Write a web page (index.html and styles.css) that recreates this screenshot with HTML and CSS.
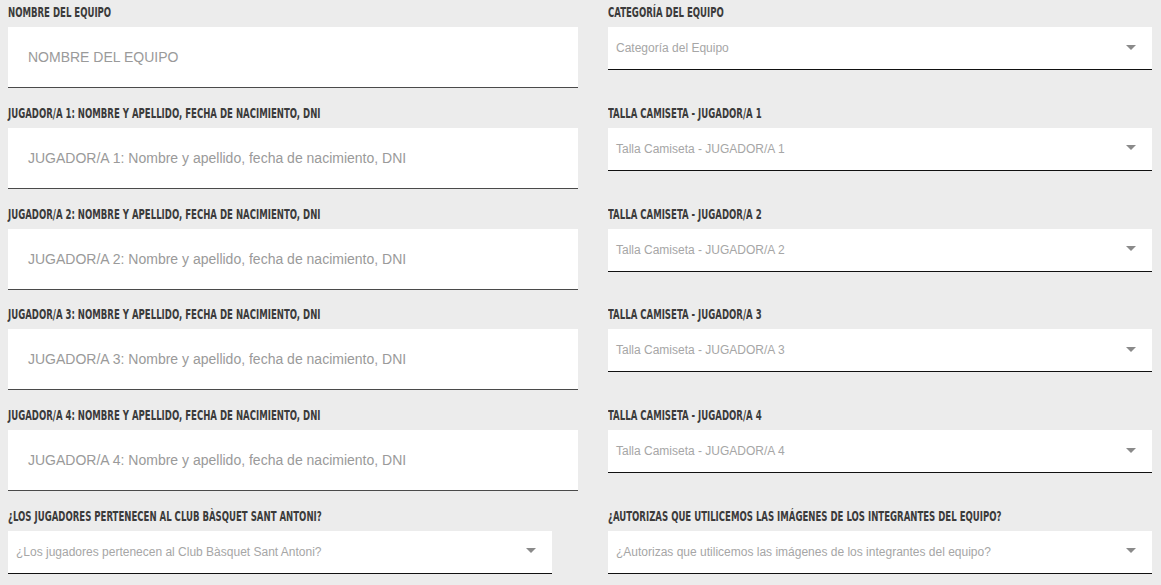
FILE: index.html
```html
<!DOCTYPE html>
<html lang="es">
<head>
<meta charset="utf-8">
<title>Formulario equipo</title>
<link rel="stylesheet" href="styles.css">
</head>
<body>
<form class="form">
  <div class="field">
    <label class="label"><span class="label-text">NOMBRE DEL EQUIPO</span></label>
    <div class="input"><span class="ph">NOMBRE DEL EQUIPO</span></div>
  </div>
  <div class="field">
    <label class="label"><span class="label-text">CATEGORÍA DEL EQUIPO</span></label>
    <div class="select"><span class="ph-s">Categoría del Equipo</span><span class="caret"></span></div>
  </div>

  <div class="field">
    <label class="label"><span class="label-text">JUGADOR/A 1: NOMBRE Y APELLIDO, FECHA DE NACIMIENTO, DNI</span></label>
    <div class="input"><span class="ph">JUGADOR/A 1: Nombre y apellido, fecha de nacimiento, DNI</span></div>
  </div>
  <div class="field">
    <label class="label"><span class="label-text">TALLA CAMISETA - JUGADOR/A 1</span></label>
    <div class="select"><span class="ph-s">Talla Camiseta - JUGADOR/A 1</span><span class="caret"></span></div>
  </div>

  <div class="field">
    <label class="label"><span class="label-text">JUGADOR/A 2: NOMBRE Y APELLIDO, FECHA DE NACIMIENTO, DNI</span></label>
    <div class="input"><span class="ph">JUGADOR/A 2: Nombre y apellido, fecha de nacimiento, DNI</span></div>
  </div>
  <div class="field">
    <label class="label"><span class="label-text">TALLA CAMISETA - JUGADOR/A 2</span></label>
    <div class="select"><span class="ph-s">Talla Camiseta - JUGADOR/A 2</span><span class="caret"></span></div>
  </div>

  <div class="field">
    <label class="label"><span class="label-text">JUGADOR/A 3: NOMBRE Y APELLIDO, FECHA DE NACIMIENTO, DNI</span></label>
    <div class="input"><span class="ph">JUGADOR/A 3: Nombre y apellido, fecha de nacimiento, DNI</span></div>
  </div>
  <div class="field">
    <label class="label"><span class="label-text">TALLA CAMISETA - JUGADOR/A 3</span></label>
    <div class="select"><span class="ph-s">Talla Camiseta - JUGADOR/A 3</span><span class="caret"></span></div>
  </div>

  <div class="field">
    <label class="label"><span class="label-text">JUGADOR/A 4: NOMBRE Y APELLIDO, FECHA DE NACIMIENTO, DNI</span></label>
    <div class="input"><span class="ph">JUGADOR/A 4: Nombre y apellido, fecha de nacimiento, DNI</span></div>
  </div>
  <div class="field">
    <label class="label"><span class="label-text">TALLA CAMISETA - JUGADOR/A 4</span></label>
    <div class="select"><span class="ph-s">Talla Camiseta - JUGADOR/A 4</span><span class="caret"></span></div>
  </div>

  <div class="field">
    <label class="label"><span class="label-text">¿LOS JUGADORES PERTENECEN AL CLUB BÀSQUET SANT ANTONI?</span></label>
    <div class="select"><span class="ph-s">¿Los jugadores pertenecen al Club Bàsquet Sant Antoni?</span><span class="caret"></span></div>
  </div>
  <div class="field">
    <label class="label"><span class="label-text">¿AUTORIZAS QUE UTILICEMOS LAS IMÁGENES DE LOS INTEGRANTES DEL EQUIPO?</span></label>
    <div class="select"><span class="ph-s">¿Autorizas que utilicemos las imágenes de los integrantes del equipo?</span><span class="caret"></span></div>
  </div>
</form>
</body>
</html>
```

FILE: styles.css
```css
html, body {
  margin: 0;
  padding: 0;
  background: #ececec;
}
body {
  font-family: "Liberation Sans", Arial, sans-serif;
  overflow: hidden;
}
.form {
  display: grid;
  grid-template-columns: 570px 544px;
  column-gap: 30px;
  row-gap: 12.8px;
  padding: 0 8px;
  align-items: start;
}
.field {
  display: flex;
  flex-direction: column;
}
.label {
  display: block;
  height: 27px;
  line-height: 23px;
  white-space: nowrap;
}
.label-text {
  display: inline-block;
  font-family: "DejaVu Sans Condensed", "DejaVu Sans", sans-serif;
  font-stretch: condensed;
  font-weight: bold;
  font-size: 13.5px;
  color: #3b3b3b;
  transform: scaleX(0.705);
  transform-origin: left center;
}
.input {
  height: 61px;
  box-sizing: border-box;
  background: #fff;
  border-bottom: 1px solid #4a4a4a;
  display: flex;
  align-items: center;
  padding-left: 20px;
}
.ph {
  font-size: 14px;
  color: #9a9a9a;
  white-space: nowrap;
}
.select {
  width: 544px;
  box-sizing: border-box;
  height: 43px;
  background: #fff;
  border-bottom: 1.5px solid #111;
  display: flex;
  align-items: center;
  padding: 0 16px 0 8px;
}
.ph-s {
  flex: 1;
  font-size: 12px;
  color: #a6a6a6;
  white-space: nowrap;
}
.caret {
  width: 0;
  height: 0;
  border-left: 5px solid transparent;
  border-right: 5px solid transparent;
  border-top: 5px solid #8a8a8a;
  margin-bottom: 2px;
}
```
